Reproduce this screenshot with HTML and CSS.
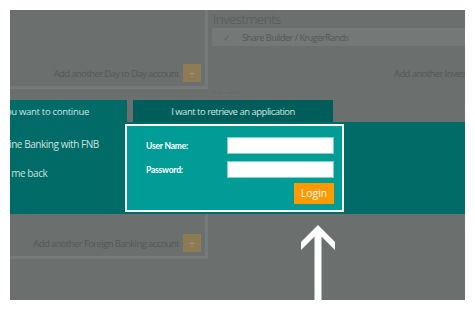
FILE: index.html
```html
<!DOCTYPE html>
<html>
<head>
<meta charset="utf-8">
<link rel="stylesheet" href="styles.css">
</head>
<body>
<div class="screen">
  <div class="top">
    <div class="panel-left">
      <div class="add-row">
        <span class="add-text">Add another Day to Day account</span>
        <span class="add-btn">+</span>
      </div>
    </div>
    <div class="panel-right">
      <div class="heading">Investments</div>
      <div class="item"><span class="check">✓</span><span>Share Builder / KrugerRands</span></div>
      <div class="add-row right">
        <span class="add-text">Add another Investment</span>
      </div>
      <div class="faint">Loans</div>
    </div>
  </div>
  <div class="band">
    <div class="tabs">
      <div class="tab tab-active"><span>Please choose how you want to continue</span></div>
      <div class="tab tab-other"><span>I want to retrieve an application</span></div>
    </div>
    <div class="band-body">
      <div class="options">
        <div class="opt">Online Banking with FNB</div>
        <div class="opt">Call me back</div>
      </div>
      <div class="login">
        <div class="field">
          <label class="lbl">User Name:</label>
          <div class="input"></div>
        </div>
        <div class="field">
          <label class="lbl">Password:</label>
          <div class="input"></div>
        </div>
        <div class="actions"><span class="btn">Login</span></div>
      </div>
    </div>
  </div>
  <div class="bottom">
    <div class="panel-left small">
      <div class="add-row">
        <span class="add-text">Add another Foreign Banking account</span>
        <span class="add-btn">+</span>
      </div>
    </div>
  </div>
  <svg class="arrow" width="46" height="80" viewBox="295 222 46 80">
    <polygon fill="#ffffff" points="318,225 335,242 335,250 321.5,236.5 321.5,302 314.5,302 314.5,236.5 301,250 301,242"/>
  </svg>
</div>
</body>
</html>
```

FILE: styles.css
```css
html, body {
  margin: 0;
  padding: 0;
  background: #ffffff;
}
body {
  font-family: "Open Sans", "Lato", sans-serif;
}
.screen {
  position: relative;
  margin: 10px;
  width: 455px;
  height: 290px;
  background: #6b6f6e;
  overflow: hidden;
  display: flex;
  flex-direction: column;
}
.top {
  display: flex;
  height: 90px;
  flex: none;
}
.panel-left {
  width: 195px;
  height: 76px;
  border-right: 3px solid #757978;
  border-bottom: 3px solid #757978;
  display: flex;
  flex-direction: column;
  justify-content: flex-end;
  flex: none;
}
.add-row {
  display: flex;
  align-items: center;
  justify-content: flex-end;
  gap: 4px;
  padding: 0 4px 4px 0;
}
.add-text {
  font-size: 9.5px;
  color: #555a58;
  letter-spacing: -0.6px;
  white-space: nowrap;
}
.add-btn {
  width: 18px;
  height: 18px;
  background: #8d7b56;
  color: #a2906c;
  font-size: 13px;
  line-height: 18px;
  text-align: center;
}
.panel-right {
  flex: 1;
  padding-left: 5px;
  display: flex;
  flex-direction: column;
  min-width: 0;
}
.heading {
  font-size: 13.5px;
  font-weight: 300;
  color: #555a58;
  letter-spacing: -0.55px;
  line-height: 16px;
  padding-top: 1px;
  height: 17px;
}
.item {
  background: #747877;
  height: 18px;
  margin-left: -1px;
  display: flex;
  align-items: center;
  font-size: 9px;
  color: #555a58;
  letter-spacing: -0.45px;
}
.check {
  width: 30px;
  text-align: center;
  color: #5b605e;
  font-size: 9px;
}
.add-row.right {
  justify-content: flex-start;
  padding: 21px 0 0 181px;
}
.faint {
  font-size: 9px;
  color: #656a68;
  padding-top: 10px;
  line-height: 8px;
  height: 4px;
  overflow: hidden;
}
.band {
  height: 114px;
  flex: none;
  display: flex;
  flex-direction: column;
}
.tabs {
  display: flex;
  height: 22px;
  gap: 6px;
}
.tab {
  display: flex;
  align-items: center;
  justify-content: center;
  font-size: 9.5px;
  color: #cfe2e0;
  letter-spacing: -0.5px;
  white-space: nowrap;
  overflow: hidden;
}
.tab-active {
  width: 117px;
  background: #006b67;
  justify-content: flex-end;
  padding-right: 38px;
  box-sizing: border-box;
  letter-spacing: -0.3px;
}
.tab-other {
  width: 200px;
  background: #005e5a;
}
.band-body {
  flex: 1;
  background: #006b67;
  display: flex;
}
.options {
  width: 115px;
  display: flex;
  flex-direction: column;
  align-items: flex-start;
  padding-top: 15px;
  gap: 14px;
  overflow: hidden;
  white-space: nowrap;
  flex: none;
}
.opt {
  font-size: 10px;
  color: #cde0de;
  letter-spacing: -0.45px;
  line-height: 15px;
  margin-left: -16px;
}
.login {
  width: 219px;
  margin-top: 2px;
  height: 88px;
  border: 2px solid #ffffff;
  background: #019c96;
  box-sizing: border-box;
  padding: 11px 8px 0 19px;
  display: flex;
  flex-direction: column;
  gap: 7px;
}
.field {
  display: flex;
  align-items: center;
  justify-content: space-between;
}
.lbl {
  font-family: "Lato", "Open Sans", sans-serif;
  font-size: 8.5px;
  font-weight: 700;
  color: #ffffff;
  letter-spacing: -0.2px;
}
.input {
  width: 105px;
  height: 15px;
  background: #ffffff;
  border: 1px solid #7fd3cf;
}
.actions {
  display: flex;
  justify-content: flex-end;
  margin-top: -2px;
}
.btn {
  width: 40px;
  height: 21px;
  background: #ff9900;
  color: #ffffff;
  font-size: 10.5px;
  line-height: 21px;
  text-align: center;
}
.bottom {
  flex: 1;
}
.panel-left.small {
  height: 42px;
}
.arrow {
  position: absolute;
  left: 285px;
  top: 212px;
}
```
